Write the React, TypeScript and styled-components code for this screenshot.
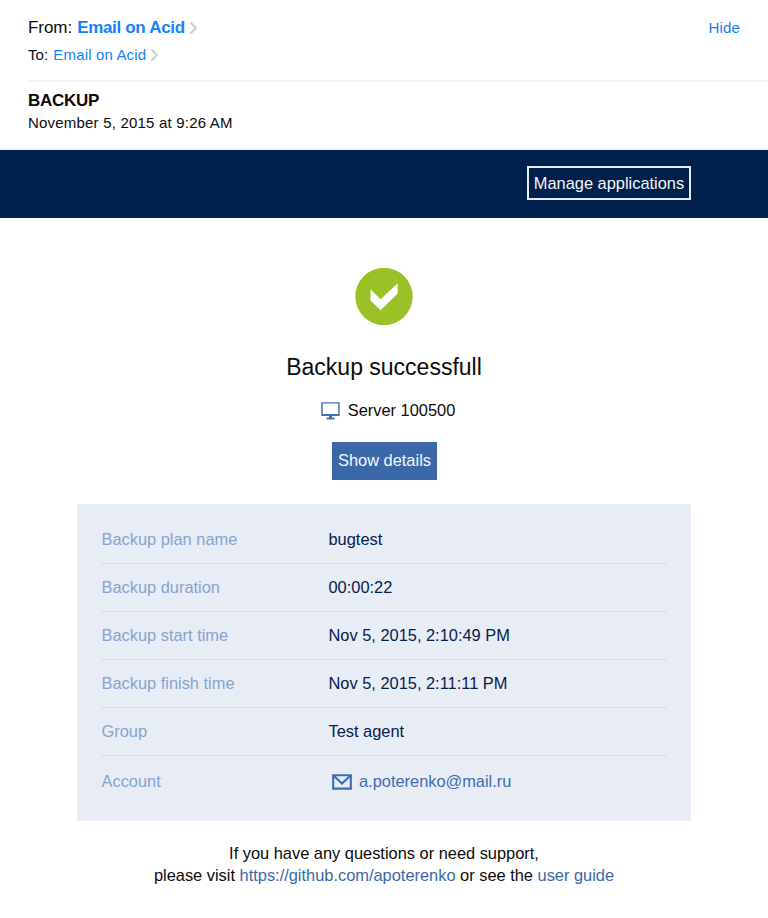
import React from "react";
import styled, { createGlobalStyle } from "styled-components";

const Global = createGlobalStyle`
  * { box-sizing: border-box; }
  body { margin: 0; background: #fff; }
`;

const Page = styled.div`
  width: 768px;
  height: 918px;
  overflow: hidden;
  background: #fff;
  color: #0b0b0b;
  font: 16.4px/22px "Liberation Sans", Arial, Helvetica, sans-serif;
`;

const MailHeader = styled.header`
  height: 150px;
  padding: 17px 0 0 28px;
  border-bottom: 2px solid #f4f4f5;
`;

const Line = styled.div<{ $h: number; $size: number; $bold?: boolean; $track?: number }>`
  display: flex;
  align-items: center;
  height: ${(p) => p.$h}px;
  font-size: ${(p) => p.$size}px;
  font-weight: ${(p) => (p.$bold ? 700 : 400)};
  letter-spacing: ${(p) => p.$track ?? 0}px;
  white-space: pre;
`;

const Contact = styled.a<{ $bold?: boolean }>`
  color: #1482fb;
  font-weight: ${(p) => (p.$bold ? 700 : 400)};
  letter-spacing: ${(p) => (p.$bold ? -0.32 : 0.16)}px;
  margin: 0 4px 0 5px;
`;

const HideLink = styled.a`
  margin-left: auto;
  padding-right: 28px;
  color: #1482fb;
  font-size: 15px;
  letter-spacing: 0.15px;
`;

const Rule = styled.div`
  height: 2px;
  margin: 10px 0 8px;
  background: #f4f4f5;
`;

const Banner = styled.nav`
  display: flex;
  justify-content: flex-end;
  align-items: flex-start;
  height: 68px;
  padding: 16.4px 77px 0 0;
  background: #00204d;
`;

const ManageButton = styled.a`
  display: flex;
  align-items: center;
  justify-content: center;
  width: 164px;
  height: 34px;
  padding-bottom: 1px;
  border: 2px solid #e8ecf2;
  color: #f4f6f9;
  white-space: nowrap;
`;

const Summary = styled.section`
  display: flex;
  flex-direction: column;
  align-items: center;
  height: 286px;
  padding-top: 50px;
`;

const Title = styled.h1`
  margin: 26px 0 0;
  font-size: 23px;
  font-weight: 400;
  line-height: 30px;
`;

const Server = styled.div`
  display: flex;
  align-items: center;
  gap: 8px;
  height: 22px;
  margin: 17px 0 0 8px;

  svg {
    margin-top: 1px;
  }
`;

const DetailsButton = styled.a`
  display: flex;
  align-items: center;
  justify-content: center;
  width: 105px;
  height: 38px;
  margin: 21px 0 0 1px;
  padding-bottom: 2px;
  background: #3a68a8;
  color: #f4f7fb;
  white-space: nowrap;
`;

const Panel = styled.dl`
  width: 614px;
  height: 317px;
  margin: 0 77px;
  padding: 12px 24px 0;
  background: #e7ecf5;
`;

const Row = styled.div<{ $last?: boolean }>`
  display: flex;
  align-items: center;
  height: ${(p) => (p.$last ? 52 : 48)}px;
  padding: 0 0 2px 0.5px;
  border-bottom: ${(p) => (p.$last ? 0 : 1)}px solid #d3deec;
`;

const Term = styled.dt`
  width: 227px;
  color: #86a4d0;
`;

const Value = styled.dd`
  margin: 0;
  color: #06204d;
`;

const Account = styled.a`
  display: flex;
  align-items: center;
  gap: 7px;
  padding-left: 3.5px;
  color: #3f6cb0;

  svg {
    margin-top: 2px;
  }
`;

const Support = styled.footer`
  padding-top: 21px;
  text-align: center;
  white-space: nowrap;
`;

const TextLink = styled.a`
  color: #3a68a8;
`;

const Chevron = () => (
  <svg width="9" height="14" viewBox="0 0 9 14" fill="none" stroke="#cdcdd0" strokeWidth="2">
    <path d="M1.500 1.500 7 7l-5.500 5.500" />
  </svg>
);

const CheckBadge = () => (
  <svg width="58" height="58" viewBox="0 0 58 58">
    <circle cx="29" cy="28.500" r="28.700" fill="#9ac125" />
    <path d="M15.500 21.300 25.600 31.300 42.700 15.300V25.500L25.600 42.300 15.500 32.500Z" fill="#fff" />
  </svg>
);

const Monitor = () => (
  <svg width="19" height="18" viewBox="0 0 19 18" fill="#4472b4">
    <path fillRule="evenodd" d="M.3.300H18.700V13.900H.3ZM1.800 1.600V11.900H17.200V1.600Z" />
    <path d="M8 13.500h3v2h2.500v2h-8v-2H8Z" />
  </svg>
);

const Envelope = () => (
  <svg width="20" height="16" viewBox="0 0 20 16" fill="none" stroke="#3f6cb0" strokeWidth="2.100">
    <path d="M1.200 1.200H18.800V14.600H1.200Z" />
    <path d="M2 2 10 9.500 18 2" />
  </svg>
);

const details = [
  ["Backup plan name", "bugtest"],
  ["Backup duration", "00:00:22"],
  ["Backup start time", "Nov 5, 2015, 2:10:49 PM"],
  ["Backup finish time", "Nov 5, 2015, 2:11:11 PM"],
  ["Group", "Test agent"],
];

export default function App() {
  return (
    <Page>
      <Global />
      <MailHeader>
        <Line $h={22} $size={17} $track={-0.05}>
          From:<Contact $bold>Email on Acid</Contact>
          <Chevron />
          <HideLink>Hide</HideLink>
        </Line>
        <Line $h={31} $size={15} $track={0.1}>
          To:<Contact>Email on Acid</Contact>
          <Chevron />
        </Line>
        <Rule />
        <Line $h={22} $size={17} $bold $track={-0.3}>BACKUP</Line>
        <Line $h={22} $size={15} $track={0.2}>November 5, 2015 at 9:26 AM</Line>
      </MailHeader>
      <Banner>
        <ManageButton>Manage applications</ManageButton>
      </Banner>
      <Summary>
        <CheckBadge />
        <Title>Backup successfull</Title>
        <Server>
          <Monitor />
          <span>Server 100500</span>
        </Server>
        <DetailsButton>Show details</DetailsButton>
      </Summary>
      <Panel>
        {details.map(([label, value]) => (
          <Row key={label}>
            <Term>{label}</Term>
            <Value>{value}</Value>
          </Row>
        ))}
        <Row $last>
          <Term>Account</Term>
          <Value>
            <Account>
              <Envelope />
              a.poterenko@mail.ru
            </Account>
          </Value>
        </Row>
      </Panel>
      <Support>
        If you have any questions or need support,
        <br />
        please visit <TextLink>https://github.com/apoterenko</TextLink> or see the{" "}
        <TextLink>user guide</TextLink>
      </Support>
    </Page>
  );
}
